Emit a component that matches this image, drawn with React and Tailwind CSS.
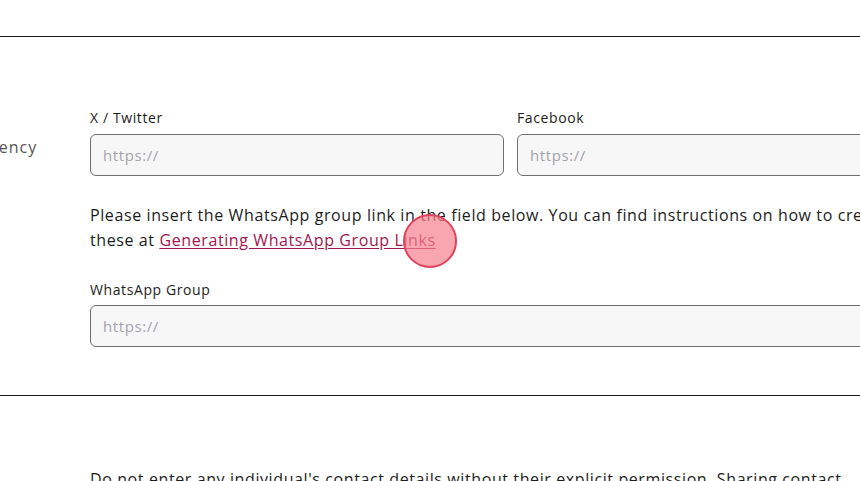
export default function App() {
  const font = { fontFamily: '"Open Sans", "Noto Sans", sans-serif' }
  return (
    <div className="w-[860px] h-[481px] overflow-hidden bg-white text-[#1c1c1c] tracking-[0.6px]" style={font}>
      <div className="h-[36px]" />
      <div className="border-t border-[#1a1a1a] w-[1000px]" />
      <div className="flex pt-[71px] pb-[48px] w-[1000px]">
        <div className="w-[90px] shrink-0 pt-[27px]">
          <span className="block -ml-[22px] text-[16px] leading-[24px] tracking-[1px] text-[#555]">Agency</span>
        </div>
        <div className="w-[841px] shrink-0">
          <div className="grid grid-cols-2 gap-[13px]">
            <div>
              <label className="block text-[14px] leading-[20px] mb-[6px]">X / Twitter</label>
              <div className="h-[42px] rounded-[6px] border border-[#6f6f6f] bg-[#f8f7f8] flex items-center px-[12px] text-[15px] text-[#a3a3ab]">https://</div>
            </div>
            <div>
              <label className="block text-[14px] leading-[20px] mb-[6px]">Facebook</label>
              <div className="h-[42px] rounded-[6px] border border-[#6f6f6f] bg-[#f8f7f8] flex items-center px-[12px] text-[15px] text-[#a3a3ab]">https://</div>
            </div>
          </div>
          <p className="mt-[27px] text-[16px] leading-[25px]">
            Please insert the WhatsApp group link in the field below. You can find instructions on how to create these at{" "}
            <span className="relative">
              <a className="text-[#a3154c] underline underline-offset-2">Generating WhatsApp Group Links</a>
              <span className="absolute right-[-21px] top-[-15px] w-[54px] h-[54px] rounded-full bg-[#f6808f]/70 border-2 border-[#e2435c]" />
            </span>
          </p>
          <label className="block mt-[27px] text-[14px] leading-[20px] mb-[5px]">WhatsApp Group</label>
          <div className="h-[42px] rounded-[6px] border border-[#6f6f6f] bg-[#f8f7f8] flex items-center px-[12px] text-[15px] text-[#a3a3ab]">https://</div>
        </div>
      </div>
      <div className="border-t border-[#1a1a1a] w-[1000px]" />
      <div className="pl-[90px] pt-[71px] w-[1000px]">
        <p className="w-[760px] text-[16px] leading-[25px]">
          Do not enter any individual's contact details without their explicit permission. Sharing contact details of others may breach privacy laws.
        </p>
      </div>
    </div>
  )
}
